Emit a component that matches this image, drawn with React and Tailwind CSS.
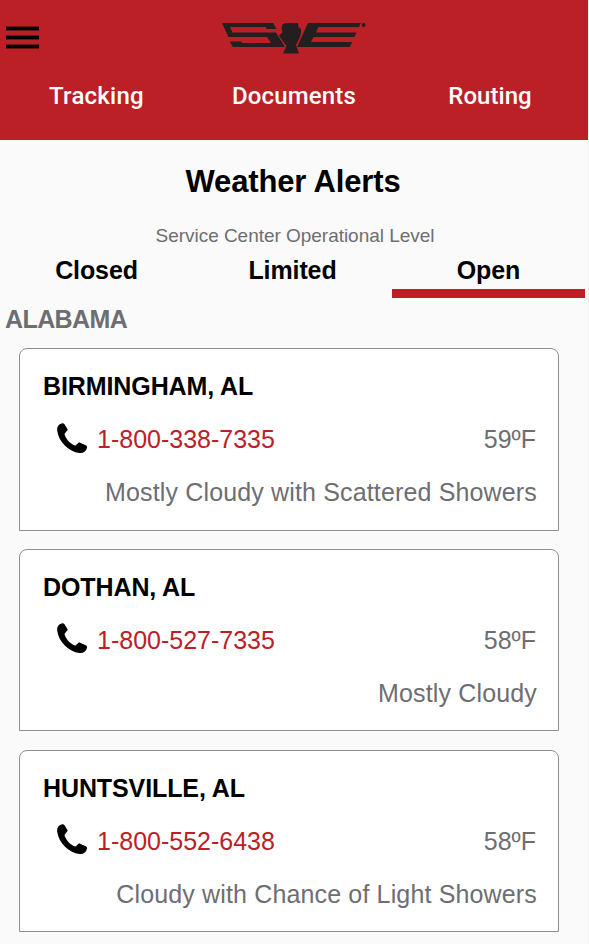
const alerts = [
  { city: "BIRMINGHAM, AL", phone: "1-800-338-7335", temp: "59ºF", sky: "Mostly Cloudy with Scattered Showers" },
  { city: "DOTHAN, AL", phone: "1-800-527-7335", temp: "58ºF", sky: "Mostly Cloudy" },
  { city: "HUNTSVILLE, AL", phone: "1-800-552-6438", temp: "58ºF", sky: "Cloudy with Chance of Light Showers" },
];

function Logo() {
  return (
    <svg className="h-8 w-[146px]" viewBox="221 22 146 32" fill="#231f20" aria-label="Logo">
      <path d="M222 23H273L276.500 29H267L265.500 27H230L232.500 32.500H276L285 47H233L229.500 41.500H241L242.500 43H271L267 37H228.500Z" />
      <path d="M282.500 24.500L285 23H298L298.500 27L301 29V33L300 37L296 45L299 53.500H283L286.500 46L280.500 38L279 35.500L282.500 32.500L281.500 28Z" />
      <path d="M308 23H361L359 27H318.500L316 32.500H356.500L354.500 37H313.500L311 42H352L350 47H297Z" />
      <circle cx="363.700" cy="25" r="1.900" />
    </svg>
  );
}

function MenuIcon() {
  return (
    <svg className="h-[23px] w-[33px]" viewBox="0 0 33 23" aria-hidden="true">
      <rect y="0.600" width="33" height="3.800" />
      <rect y="9.600" width="33" height="3.800" />
      <rect y="18.600" width="33" height="3.800" />
    </svg>
  );
}

function PhoneIcon() {
  return (
    <svg className="h-[31px] w-[31px]" viewBox="0 0 31 31" aria-hidden="true">
      <path d="M4.500.4Q6.600-.3 7.700 1.500L10.800 6.800L7.800 10.600Q7.400 11.400 7.800 12.300C9.800 17.100 13.800 21.200 18.500 22.600L22 19.200L29.200 22.600Q30.400 23.300 30 24.800C29.100 28.400 26.500 30.500 22.500 30C11.600 28.600 1.600 18.800.2 7.700C-.3 3.700 1.700 1.200 4.500.4Z" />
    </svg>
  );
}

function AlertCard({ city, phone, temp, sky }) {
  return (
    <article className="h-[182.4px] w-[540px] rounded-t-lg border border-[#8f8f91] bg-white pr-[21px] pl-[23px]">
      <h3 className="mt-[23px] leading-7 font-bold tracking-[-0.1px] text-black">{city}</h3>
      <div className="mt-[21.8px] flex h-8 items-center">
        <span className="ml-[14px]"><PhoneIcon /></span>
        <a className="ml-[9px] pt-[3.6px] text-[#bb2027]">{phone}</a>
        <span className="mr-px ml-auto pt-[3.6px]">{temp}</span>
      </div>
      <p className="mt-[24.2px] text-right leading-7 tracking-[0.15px]">{sky}</p>
    </article>
  );
}

export default function App() {
  return (
    <div className="h-[944px] w-[589px] overflow-hidden border-r border-[#f0f0f0] bg-[#fafafa] font-['Liberation_Sans',Arial,sans-serif] text-[25px] text-[#6d6e71]">
      <header className="h-[140px] bg-[#bb2027]">
        <div className="grid h-[72px] grid-cols-[1fr_146px_1fr]">
          <button className="mt-[26px] ml-1.5 flex h-[23px] w-[33px]" aria-label="Menu">
            <MenuIcon />
          </button>
          <div className="mt-[22px]"><Logo /></div>
        </div>
        <nav className="grid grid-cols-3 pt-2 text-center font-['Roboto',sans-serif] text-[24px] leading-8 font-medium tracking-[0.15px] text-white">
          <a className="pr-[3px] tracking-[0.25px]">Tracking</a>
          <a>Documents</a>
          <a className="tracking-[0.05px]">Routing</a>
        </nav>
      </header>
      <main>
        <h1 className="mt-6 pr-[2px] text-center text-[31px] leading-9 font-bold tracking-[-0.15px] text-black">Weather Alerts</h1>
        <p className="mt-6 pl-0.5 text-center text-[19px] leading-6 tracking-[-0.03px]">Service Center Operational Level</p>
        <div className="grid h-[50px] grid-cols-3 text-center leading-[44px] font-bold tracking-[-0.1px] text-black">
          <span className="mr-[3px]">Closed</span>
          <span className="mr-[3px]">Limited</span>
          <span className="mr-[3px] h-[50px] border-b-[9px] border-[#bb2027]">Open</span>
        </div>
        <h2 className="mt-[7px] ml-[5px] leading-7 font-bold tracking-[-0.6px]">ALABAMA</h2>
        <div className="mt-[15.3px] ml-[19px] flex flex-col gap-[18.3px]">
          {alerts.map((a) => <AlertCard key={a.city} {...a} />)}
        </div>
      </main>
    </div>
  );
}
